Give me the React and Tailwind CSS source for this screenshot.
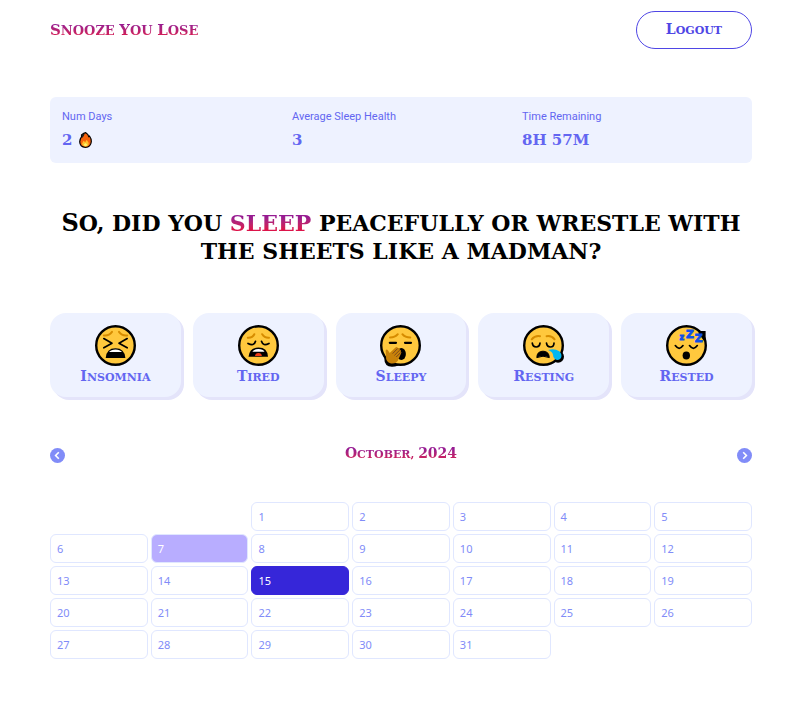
import React from "react";

const display = "font-['DejaVu_Serif','Liberation_Serif',serif] font-bold";
const gradient = "bg-linear-to-b from-[#961b92] from-25% to-[#dc144a] to-75% bg-clip-text text-transparent";

// Small capitals: capitals and digits take the larger size, other letters the smaller one.
function SmallCaps({ text, large = "text-sm" }) {
  return text.split(/([A-Z0-9]+)/).map((part, i) =>
    /[A-Z0-9]/.test(part) ? (
      <span key={i} className={large}>{part}</span>
    ) : (
      <span key={i} className="uppercase">{part}</span>
    )
  );
}

function Face({ children, extra }) {
  return (
    <svg width="41" height="41" viewBox="0 0 41 41" fill="none" aria-hidden="true" className="shrink-0 overflow-visible">
      {extra}
      <circle cx="20.5" cy="20.5" r="19.3" fill="#ffc83d" stroke="#000" strokeWidth="2.4" />
      {children}
    </svg>
  );
}

const brow = { stroke: "#d68c00", strokeWidth: 2, strokeLinecap: "round" };
const line = { stroke: "#000", strokeWidth: 1.7, strokeLinecap: "round", strokeLinejoin: "round" };

const InsomniaFace = () => (
  <Face>
    <path d="M8.8 10.4Q14 11 17 6.8M24 6.8Q27 11 32.2 10.4" {...brow} />
    <path d="M8.8 13.6 17 18.2 8.8 22.8M32.2 13.6 24 18.2 32.2 22.8" {...line} />
    <path d="M10.7 33Q11.5 23.3 20.5 23.3T30.4 33Z" fill="#000" />
    <path d="M14 27Q16 24.4 20.5 24.4T27 27Z" fill="#fff" />
  </Face>
);

const TiredFace = () => (
  <Face>
    <path d="M9.8 12.7Q14.5 13 16.3 9.2M24.2 9.2Q26.5 13 31 12.7" {...brow} />
    <path d="M10 18.4Q16 21.6 17.5 16.3M31 18.4Q25 21.6 23.5 16.3" {...line} />
    <path d="M10.5 31.8Q11.5 22.5 20.5 22.5T30 31.8Z" fill="#000" />
    <path d="M14.3 26.8Q16 24 20.5 24T26.5 26.8Z" fill="#fff" />
    <path d="M17 31Q17.3 28 20.5 28T23.8 31Z" fill="#f03a17" />
  </Face>
);

const SleepyFace = () => (
  <Face
    extra={<path d="M6 24 5 33Q5 41 12 41 18 41 21 37" fill="#000" stroke="#000" strokeWidth="1.5" />}
  >
    <path d="M10 12.6Q15 12.6 17.8 9.2M22.4 9.2Q25 12.6 30.3 12.6" {...brow} />
    <path d="M9.8 17.8H16M25 17.8H31" {...line} strokeWidth="2.2" />
    <ellipse cx="21.3" cy="29" rx="4.6" ry="6" fill="#000" />
    <path d="M5.6 25.8Q6.5 23.6 8 25.5L9.7 28 15.5 22.4Q17.2 21.4 17.8 23.1 19.8 22.5 19.8 24.5 21.4 24.8 20.8 26.6 22 27.5 20.8 29.1L18.8 33.5Q17 39 11 38.4 5.5 37 6 31Z" fill="#c98209" />
    <path d="M12.6 28.6 17.6 23.5M14.4 30.4 19.8 25M16.2 32 20.8 27.4" stroke="#74431f" strokeWidth=".9" />
  </Face>
);

const RestingFace = () => (
  <Face
    extra={<circle cx="35" cy="31.8" r="6" fill="#000" />}
  >
    <path d="M8.7 14.3Q12 10.4 17 11.2M23.6 11.2Q28.6 10.4 31.6 14.3" {...brow} />
    <path d="M9.3 18.2Q9.8 22 13.2 22T17 18.2M23.5 18.2Q24 22 27.4 22T31 18.2" {...line} />
    <path d="M13.8 32.6Q14 26.2 20 26.2T26.3 32.6Q20 29.8 13.8 32.6Z" fill="#000" stroke="#000" />
    <path d="M25.2 25Q31 23 36.4 26.2 39.5 29.5 38 33 35.4 36.3 31.8 34 30 32.6 30 29.8 29.4 26.6 25.2 25Z" fill="#00b7f0" />
  </Face>
);

const RestedFace = () => (
  <Face extra={<path d="M30 6H39.6V17L36 20Z" fill="#000" />}>
    <path d="M32 7.4H38V16Z" fill="#000" />
    <path d="M9.3 20.6Q13.2 26 17 20.6M23.5 20.6Q27.4 26 31.3 20.6" {...line} />
    <ellipse cx="20.3" cy="30.6" rx="3.7" ry="4" fill="#000" />
    <g fill="#0f4fe8" stroke="#0f4fe8" strokeWidth=".8" className="font-['DejaVu_Sans',sans-serif] font-bold">
      <text x="13.6" y="15" fontSize="8">z</text>
      <text x="20" y="13.4" fontSize="11">Z</text>
      <text x="28.8" y="17.4" fontSize="11">Z</text>
    </g>
  </Face>
);

const Flame = () => (
  <svg width="13" height="16" viewBox="0 0 13 16" aria-hidden="true">
    <path d="M6.8.7Q9.4 2.2 9.7 4.5L10.5 4Q12.4 6.6 12.3 9.8 11.7 15.3 6.5 15.3.9 15 .7 9.7.9 6.9 2.6 4.6L2.5 3Q4.8 1 6.8.7Z" fill="#f7630c" stroke="#000" strokeWidth="1.2" />
    <path d="M2.5 3 6 1Q5 4.2 3.2 6Z" fill="#222" />
    <path d="M3.1 11.5 4.6 8.7 6.2 10.2 7.7 7.7 9.7 11Q9.8 14.5 6.5 14.5 3.2 14.3 3.1 11.5Z" fill="#ffc22b" />
    <path d="M4.8 12.6 6.5 10.9 8.2 12.6Q8 14.3 6.5 14.3 5 14.3 4.8 12.6Z" fill="#fff36b" />
  </svg>
);

const moods = [
  { name: "Insomnia", Icon: InsomniaFace },
  { name: "Tired", Icon: TiredFace },
  { name: "Sleepy", Icon: SleepyFace },
  { name: "Resting", Icon: RestingFace },
  { name: "Rested", Icon: RestedFace },
];

const days = Array.from({ length: 31 }, (_, i) => i + 1);

function dayStyle(day) {
  if (day === 15) return "border-[#3626d9] bg-[#3626d9] text-white";
  if (day === 7) return "border-[#e0e7ff] bg-[#b8adff] text-white";
  return "border-[#e0e7ff] bg-white text-[#818cf8]";
}

function Stat({ label, children }) {
  return (
    <div>
      <dt className="font-['Roboto',sans-serif] text-[11px] leading-[18px]">{label}</dt>
      <dd className={`mt-0.5 flex items-center gap-[7px] text-[15px] leading-6 ${display}`}>{children}</dd>
    </div>
  );
}

function NavButton({ label, d }) {
  return (
    <button type="button" aria-label={label} className="flex size-[15px] items-center justify-center rounded-full bg-[#818cf8]">
      <svg width="15" height="15" viewBox="0 0 15 15" fill="none" stroke="#fff" strokeWidth="1.6" aria-hidden="true">
        <path d={d} />
      </svg>
    </button>
  );
}

export default function App() {
  return (
    <div className="min-h-screen bg-white pl-[50px] pr-[58px] pb-14 font-['Noto_Sans',sans-serif] text-black">
      <header className="flex items-center justify-between pt-[11px]">
        <h1 className={`text-[13px] leading-6 ${display} ${gradient}`}>
          <SmallCaps text="Snooze You Lose" large="text-[15px]" />
        </h1>
        <button type="button" className={`h-[38px] rounded-full border border-[#4f46e5] px-[29px] text-[11px] leading-5 text-[#4f46e5] ${display}`}>
          <SmallCaps text="Logout" />
        </button>
      </header>

      <main>
        <dl className="mt-12 grid grid-cols-3 gap-3 rounded-md bg-[#eef2ff] px-3 py-[11px] text-[#6366f1]">
          <Stat label="Num Days">2 <Flame /></Stat>
          <Stat label="Average Sleep Health">3</Stat>
          <Stat label="Time Remaining">8H 57M</Stat>
        </dl>

        <h2 className={`mt-[46px] text-center text-[22px] leading-7 ${display}`}>
          <SmallCaps text="So, did you " large="text-2xl leading-7" />
          <span className={`uppercase ${gradient}`}>sleep</span>
          <SmallCaps text=" peacefully or wrestle with " />
          <SmallCaps text="the sheets like a madman?" />
        </h2>

        <div className="mt-12 grid grid-cols-5 gap-3">
          {moods.map(({ name, Icon }) => (
            <button
              key={name}
              type="button"
              className={`flex h-[84px] flex-col items-center rounded-2xl bg-[#eef2ff] pt-3 text-[11px] leading-5 text-[#6366f1] shadow-[3px_3px_0_#e4e4fa] ${display}`}
            >
              <Icon />
              <span><SmallCaps text={name} /></span>
            </button>
          ))}
        </div>

        <div className="mt-[46px] flex items-center justify-between">
          <NavButton label="Previous month" d="M8.8 4.2 5.6 7.5 8.8 10.8" />
          <h3 className={`text-[11px] leading-6 ${display} ${gradient}`}>
            <SmallCaps text="October, 2024" />
          </h3>
          <NavButton label="Next month" d="M6.2 4.2 9.4 7.5 6.2 10.8" />
        </div>

        <div className="mt-[35px] grid grid-cols-7 gap-[3px]">
          {days.map((day) => (
            <div
              key={day}
              className={`h-[29px] rounded-md border px-1.5 text-[11px] leading-[27px] ${day === 1 ? "col-start-3" : ""} ${dayStyle(day)}`}
            >
              {day}
            </div>
          ))}
        </div>
      </main>
    </div>
  );
}
